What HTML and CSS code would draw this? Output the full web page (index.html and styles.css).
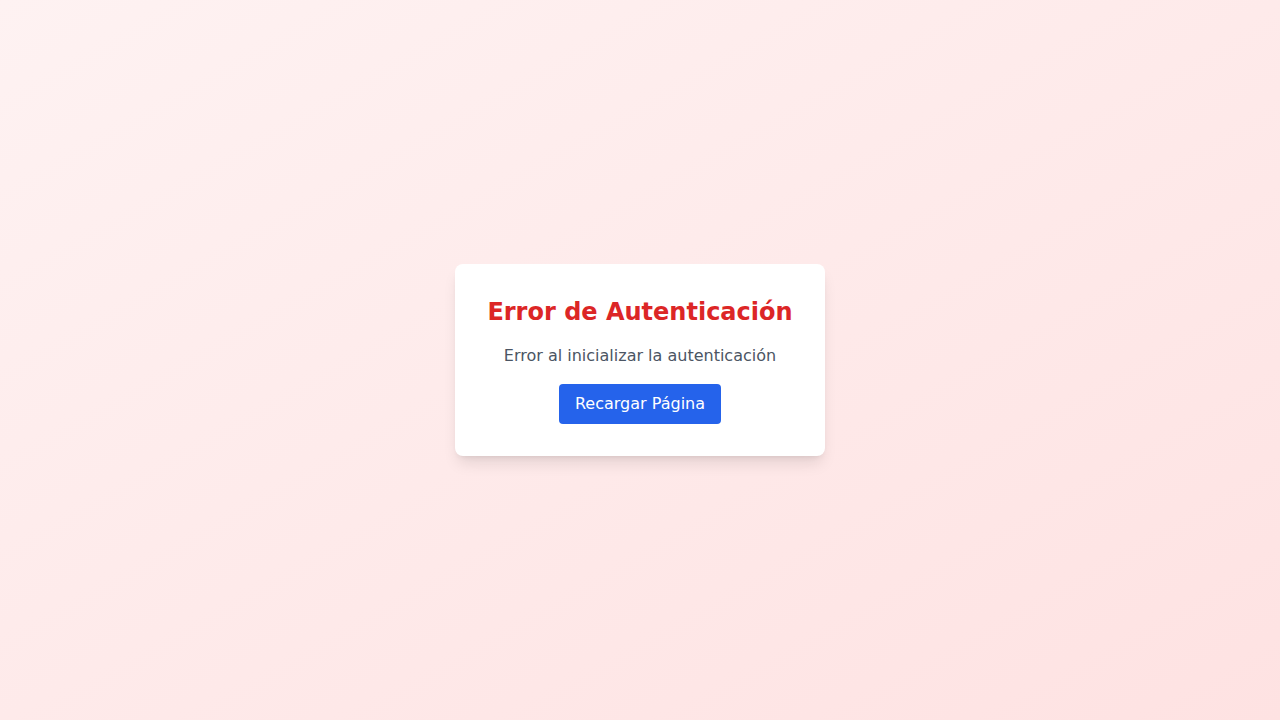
FILE: index.html
```html
<!DOCTYPE html>
<html lang="es">
<head>
<meta charset="utf-8">
<title>Error de Autenticación</title>
<link rel="stylesheet" href="styles.css">
</head>
<body>
<main class="screen">
  <div class="card">
    <h1 class="title">Error de Autenticación</h1>
    <p class="message">Error al inicializar la autenticación</p>
    <button class="reload" type="button">Recargar Página</button>
  </div>
</main>
</body>
</html>
```

FILE: styles.css
```css
* { box-sizing: border-box; }
html, body { margin: 0; padding: 0; }
body {
  font-family: "DejaVu Sans", sans-serif;
}
.screen {
  min-height: 100vh;
  display: flex;
  align-items: center;
  justify-content: center;
  background: linear-gradient(to bottom right, #fef2f2, #fee2e2);
}
.card {
  background: #ffffff;
  padding: 32px;
  border-radius: 8px;
  box-shadow: 0 10px 15px -3px rgba(0,0,0,0.1), 0 4px 6px -4px rgba(0,0,0,0.1);
  text-align: center;
}
.title {
  margin: 0 0 16px;
  font-size: 24px;
  line-height: 32px;
  font-weight: 700;
  color: #dc2626;
}
.message {
  margin: 0 0 16px;
  font-size: 16px;
  line-height: 24px;
  color: #4b5563;
}
.reload {
  font-family: inherit;
  font-size: 16px;
  line-height: 24px;
  padding: 8px 16px;
  border: none;
  border-radius: 4px;
  background: #2563eb;
  color: #ffffff;
  cursor: pointer;
}
```
